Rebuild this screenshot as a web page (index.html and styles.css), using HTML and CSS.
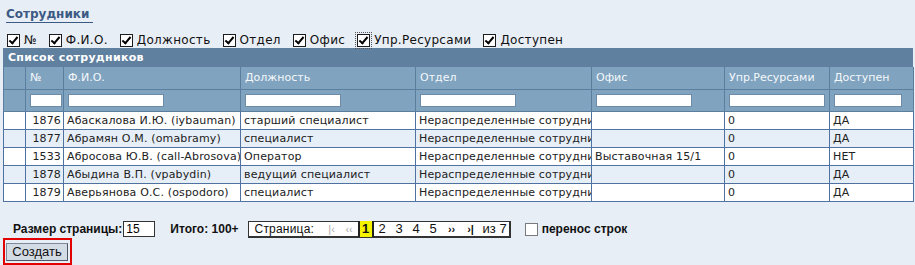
FILE: index.html
```html
<!DOCTYPE html>
<html lang="ru">

<head>
    <meta charset="UTF-8">
    <title>Сотрудники</title>
    <link rel="stylesheet" href="styles.css">
</head>

<body>

    <div class="page">
        <h1 class="page__title">Сотрудники</h1>

        <div class="columns">
            <label class="columns__item"><span class="check check--on"></span>№</label>
            <label class="columns__item"><span class="check check--on"></span>Ф.И.О.</label>
            <label class="columns__item"><span class="check check--on"></span>Должность</label>
            <label class="columns__item"><span class="check check--on"></span>Отдел</label>
            <label class="columns__item"><span class="check check--on"></span>Офис</label>
            <label class="columns__item"><span class="check check--on check--focus"></span>Упр.Ресурсами</label>
            <label class="columns__item"><span class="check check--on"></span>Доступен</label>
        </div>

        <div class="grid">
            <div class="grid__caption">Список сотрудников</div>
            <table class="grid__table">
                <colgroup>
                    <col class="col-sel">
                    <col class="col-num">
                    <col class="col-fio">
                    <col class="col-post">
                    <col class="col-dept">
                    <col class="col-office">
                    <col class="col-res">
                    <col class="col-avail">
                </colgroup>
                <thead>
                    <tr class="grid__head">
                        <th></th>
                        <th>№</th>
                        <th>Ф.И.О.</th>
                        <th>Должность</th>
                        <th>Отдел</th>
                        <th>Офис</th>
                        <th>Упр.Ресурсами</th>
                        <th>Доступен</th>
                    </tr>
                    <tr class="grid__filter">
                        <th></th>
                        <th><input class="filter filter--full" type="text"></th>
                        <th><input class="filter" type="text"></th>
                        <th><input class="filter" type="text"></th>
                        <th><input class="filter" type="text"></th>
                        <th><input class="filter" type="text"></th>
                        <th><input class="filter" type="text"></th>
                        <th><input class="filter filter--short" type="text"></th>
                    </tr>
                </thead>
                <tbody>
                    <tr>
                        <td></td>
                        <td class="num">1876</td>
                        <td>Абаскалова И.Ю. (iybauman)</td>
                        <td>старший специалист</td>
                        <td>Нераспределенные сотрудники</td>
                        <td></td>
                        <td>0</td>
                        <td>ДА</td>
                    </tr>
                    <tr class="alt">
                        <td></td>
                        <td class="num">1877</td>
                        <td>Абрамян О.М. (omabramy)</td>
                        <td>специалист</td>
                        <td>Нераспределенные сотрудники</td>
                        <td></td>
                        <td>0</td>
                        <td>ДА</td>
                    </tr>
                    <tr>
                        <td></td>
                        <td class="num">1533</td>
                        <td>Абросова Ю.В. (call-Abrosova)</td>
                        <td>Оператор</td>
                        <td>Нераспределенные сотрудники</td>
                        <td>Выставочная 15/1</td>
                        <td>0</td>
                        <td>НЕТ</td>
                    </tr>
                    <tr class="alt">
                        <td></td>
                        <td class="num">1878</td>
                        <td>Абыдина В.П. (vpabydin)</td>
                        <td>ведущий специалист</td>
                        <td>Нераспределенные сотрудники</td>
                        <td></td>
                        <td>0</td>
                        <td>ДА</td>
                    </tr>
                    <tr>
                        <td></td>
                        <td class="num">1879</td>
                        <td>Аверьянова О.С. (ospodoro)</td>
                        <td>специалист</td>
                        <td>Нераспределенные сотрудники</td>
                        <td></td>
                        <td>0</td>
                        <td>ДА</td>
                    </tr>
                </tbody>
            </table>
        </div>

        <div class="pager-bar">
            <span class="pager-bar__label">Размер страницы:</span>
            <input class="pager-bar__size" type="text" value="15">
            <span class="pager-bar__label pager-bar__total">Итого: 100+</span>
            <div class="pager">
                <span class="pager__title">Страница:</span>
                <span class="pager__arrow">|&lsaquo;</span>
                <span class="pager__arrow pager__arrow--prev">&lsaquo;&lsaquo;</span>
                <span class="pager__page pager__page--current">1</span>
                <span class="pager__page">2</span>
                <span class="pager__page">3</span>
                <span class="pager__page">4</span>
                <span class="pager__page">5</span>
                <span class="pager__arrow pager__arrow--active pager__arrow--next">&rsaquo;&rsaquo;</span>
                <span class="pager__arrow pager__arrow--active">&rsaquo;|</span>
                <span class="pager__of">из 7</span>
            </div>
            <label class="pager-bar__wrap"><span class="check"></span>перенос строк</label>
        </div>

        <div class="actions">
            <span class="actions__mark"><button class="button" type="button">Создать</button></span>
        </div>
    </div>

</body>

</html>
```

FILE: styles.css
```css
* {
    padding: 0;
    margin: 0;
    box-sizing: border-box;
}

body {
    background-color: #e8eef6;
    font-family: "DejaVu Sans", Verdana, sans-serif;
    font-size: 11px;
    color: #222;
}

.page {
    padding: 7px 2px 0 3px;
}

.page__title {
    display: inline-block;
    margin-left: 3px;
    padding-right: 4px;
    font-size: 12px;
    font-weight: bold;
    line-height: 15px;
    color: #3b5a84;
    border-bottom: 1px solid #3b5a84;
}

/* column switches */
.columns {
    display: flex;
    align-items: center;
    height: 14px;
    margin-top: 10px;
    margin-left: 4px;
    gap: 12px;
}

.columns__item {
    display: flex;
    align-items: center;
    gap: 4px;
    font-size: 12px;
    line-height: 14px;
    letter-spacing: 0.3px;
    color: #111;
}

.check {
    display: inline-block;
    width: 13px;
    height: 13px;
    border: 1px solid #1c1c1c;
    background-color: #fff;
    position: relative;
}

.check--on::after {
    content: "";
    position: absolute;
    left: 3px;
    top: 0px;
    width: 3px;
    height: 7px;
    border-right: 2px solid #000;
    border-bottom: 2px solid #000;
    transform: rotate(40deg);
}

.check--focus {
    outline: 1px dotted #555;
    outline-offset: 1px;
}

/* grid */
.grid {
    width: 910px;
    margin-top: 1px;
}

.grid__caption {
    height: 19px;
    line-height: 19px;
    padding-left: 5px;
    background-color: #60809f;
    color: #fff;
    font-weight: bold;
    font-size: 11px;
    letter-spacing: 0.3px;
}

.grid__table {
    width: 910px;
    table-layout: fixed;
    border-collapse: collapse;
}

.col-sel { width: 22px; }
.col-num { width: 38px; }
.col-fio { width: 177px; }
.col-post { width: 175px; }
.col-dept { width: 176px; }
.col-office { width: 133px; }
.col-res { width: 105px; }
.col-avail { width: 84px; }

.grid__table th,
.grid__table td {
    white-space: nowrap;
    overflow: hidden;
    text-align: left;
    font-weight: normal;
    padding: 0 3px;
}

.grid__table th {
    background-color: #80a3bf;
    color: #f4f8fb;
    height: 22px;
    border: 1px solid #5c7e9e;
}

.grid__head th {
    border-top: none;
    padding-left: 4px;
}

.filter {
    display: block;
    width: 96px;
    height: 13px;
    border: 1px solid #6d8aa6;
    background-color: #fff;
    margin-left: 1px;
}

.filter--full {
    width: 32px;
}

.filter--short {
    width: 68px;
}

.grid__table td {
    height: 18px;
    background-color: #fff;
    border: 1px solid #4f72a0;
    color: #222;
    letter-spacing: 0.15px;
}

.grid__table tr.alt td {
    background-color: #e6eef7;
}

.grid__table td.num {
    text-align: right;
    padding-right: 2px;
}

/* pager */
.pager-bar {
    display: flex;
    align-items: center;
    margin-top: 19px;
    margin-left: 10px;
    height: 17px;
    font-family: "Liberation Sans", Arial, sans-serif;
}

.pager-bar__label {
    font-weight: bold;
    font-size: 12px;
    color: #111;
}

.pager-bar__size {
    width: 32px;
    height: 16px;
    margin-left: 1px;
    border: 1px solid #333;
    background-color: #fff;
    font-family: "Liberation Sans", Arial, sans-serif;
    font-size: 12px;
    padding-left: 2px;
}

.pager-bar__total {
    margin-left: 15px;
}

.pager {
    display: flex;
    align-items: center;
    height: 17px;
    margin-left: 9px;
    padding: 0 2px 0 6px;
    border: 1px solid #333;
    border-right-width: 2px;
    border-bottom-width: 2px;
    background-color: #fff;
    font-size: 13px;
    color: #111;
}

.pager__title {
    width: 68px;
    font-size: 12px;
    letter-spacing: 0.2px;
}

.pager__arrow {
    width: 18px;
    color: #aaa;
    font-size: 11px;
    text-align: center;
}

.pager__arrow--prev {
    width: 17px;
}

.pager__arrow--next {
    width: 20px;
}

.pager__arrow--active {
    color: #111;
    font-weight: bold;
}

.pager__page {
    width: 17px;
    text-align: center;
}

.pager__page--current {
    width: 16px;
    height: 16px;
    line-height: 16px;
    background-color: #f4f400;
    border-left: 2px solid #222;
    border-right: 2px solid #222;
    font-weight: bold;
}

.pager__of {
    margin-left: 3px;
    line-height: 14px;
}

.pager-bar__wrap {
    display: flex;
    align-items: center;
    gap: 4px;
    margin-left: 14px;
    font-weight: bold;
    font-size: 12px;
    color: #111;
}

.pager-bar__wrap .check {
    border-color: #7a7a7a;
}

/* actions */
.actions {
    display: flex;
}

.actions__mark {
    display: inline-block;
    padding: 3px 2px 2px 1px;
    border: 2px solid #e30000;
}

.button {
    display: block;
    width: 62px;
    height: 18px;
    font-family: "Liberation Sans", Arial, sans-serif;
    font-size: 13px;
    color: #111;
    background-color: #d3dbe5;
    border: 1px solid #7f8b99;
    border-right-color: #4d5866;
    border-bottom-color: #4d5866;
}
```
